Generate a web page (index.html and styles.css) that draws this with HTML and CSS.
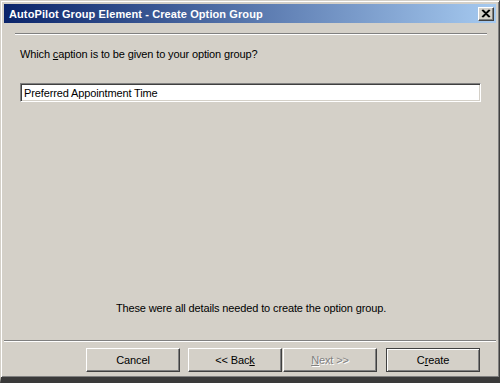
FILE: index.html
```html
<!DOCTYPE html>
<html>
<head>
<meta charset="utf-8">
<link rel="stylesheet" href="styles.css">
</head>
<body>
<div class="window">
  <div class="titlebar">
    <span class="title">AutoPilot Group Element - Create Option Group</span>
    <span class="close"><svg width="10" height="9" viewBox="0 0 10 9"><path d="M1 1 L8 8 M2 1 L9 8 M8 1 L1 8 M9 1 L2 8" stroke="#000" stroke-width="1.2" fill="none"/></svg></span>
  </div>
  <div class="body">
    <div class="rule"></div>
    <p class="question">Which <u>c</u>aption is to be given to your option group?</p>
    <div class="textbox">Preferred Appointment Time</div>
    <div class="spacer"></div>
    <p class="info">These were all details needed to create the option group.</p>
  </div>
  <div class="rule bottom-rule"></div>
  <div class="buttons">
    <div class="btn cancel">Cancel</div>
    <div class="btn back">&lt;&lt; Bac<u>k</u></div>
    <div class="btn next disabled"><u>N</u>ext &gt;&gt;</div>
    <div class="btn create default">C<u>r</u>eate</div>
  </div>
</div>
</body>
</html>
```

FILE: styles.css
```css
html, body {
  margin: 0;
  padding: 0;
  background: #d4d0c8;
}
.window {
  width: 500px;
  height: 383px;
  box-sizing: border-box;
  background: #d4d0c8;
  border-style: solid;
  border-width: 1px 1px 6px 1px;
  border-color: #d4d0c8 #404040 #3a3a3a #d4d0c8;
  box-shadow: inset 1px 1px 0 #ffffff, inset -1px -1px 0 #808080;
  padding: 3px 3px 0 3px;
  display: flex;
  flex-direction: column;
  font-family: "Liberation Sans", Arial, sans-serif;
  font-size: 11px;
  letter-spacing: -0.13px;
  color: #000;
}
.titlebar {
  height: 19px;
  background: linear-gradient(to right, #0a246a, #a6caf0);
  display: flex;
  align-items: center;
  justify-content: space-between;
  padding: 0 2px 0 5px;
}
.title {
  color: #fff;
  font-weight: bold;
  font-size: 11px;
  letter-spacing: 0.1px;
}
.close {
  width: 16px;
  height: 14px;
  box-sizing: border-box;
  background: #d4d0c8;
  border: 1px solid;
  border-color: #ffffff #404040 #404040 #ffffff;
  box-shadow: inset -1px -1px 0 #808080;
  display: flex;
  align-items: center;
  justify-content: center;
}
.body {
  flex: 1;
  display: flex;
  flex-direction: column;
  padding: 10px 9px 0 11px;
}
.rule {
  height: 0;
  border-top: 1px solid #808080;
  border-bottom: 1px solid #ffffff;
}
.question {
  margin: 13px 0 0 5px;
  line-height: 13px;
}
.textbox {
  margin: 22px 6px 0 5px;
  height: 19px;
  box-sizing: border-box;
  background: #fff;
  border: 1px solid;
  border-color: #808080 #ffffff #ffffff #808080;
  box-shadow: inset 1px 1px 0 #404040, inset -1px -1px 0 #d4d0c8;
  padding: 0 3px;
  display: flex;
  align-items: center;
}
.spacer {
  flex: 1;
}
.info {
  margin: 0 0 25px 0;
  text-align: center;
  line-height: 13px;
}
.buttons {
  display: flex;
  padding: 6px 0 0 82px;
  height: 24px;
  margin-bottom: 5px;
}
.btn {
  width: 94px;
  height: 24px;
  box-sizing: border-box;
  border: 1px solid;
  border-color: #ffffff #404040 #404040 #ffffff;
  box-shadow: inset -1px -1px 0 #808080;
  display: flex;
  align-items: center;
  justify-content: center;
}
.back {
  margin-left: 8px;
}
.next {
  margin-left: 1px;
}
.create {
  margin-left: 9px;
}
.disabled {
  color: #808080;
  text-shadow: 1px 1px 0 #ffffff;
}
.default {
  border-color: #404040;
  box-shadow: inset 1px 1px 0 #ffffff, inset -1px -1px 0 #808080;
}
```
